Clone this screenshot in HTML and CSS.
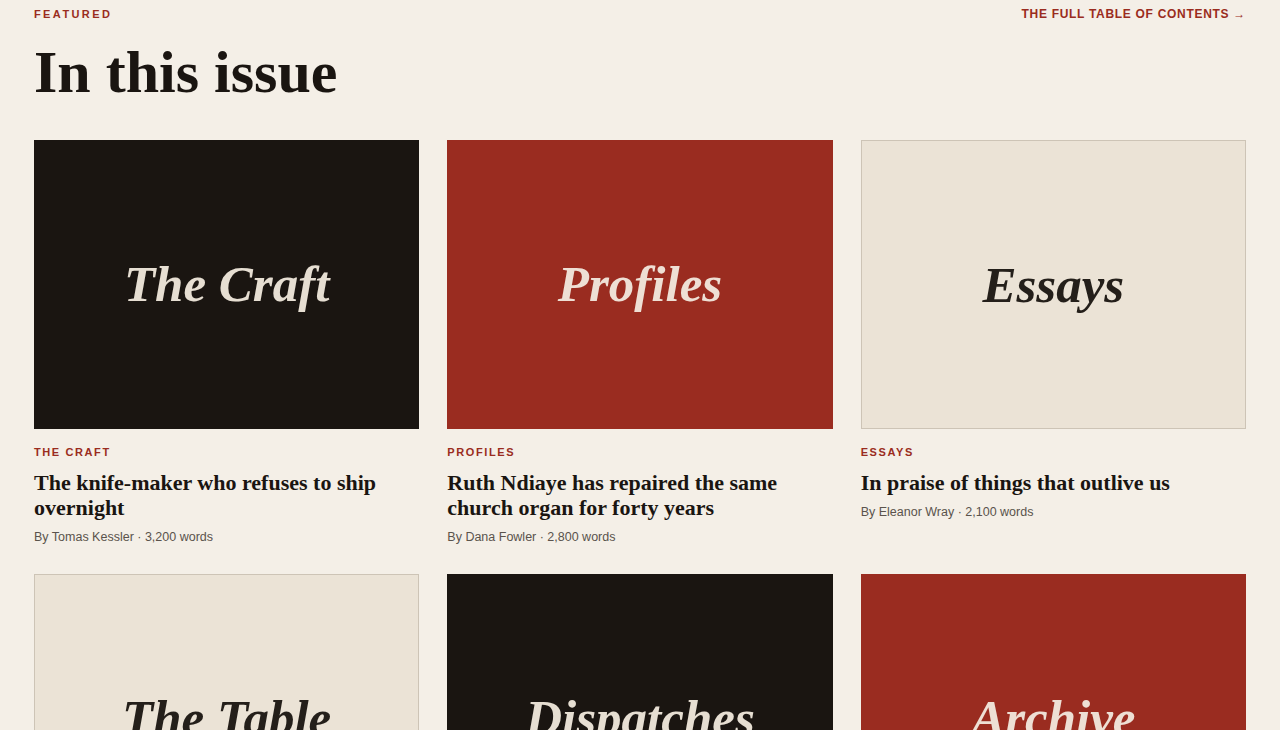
FILE: index.html
```html
<!DOCTYPE html>
<html>
    <head>
        <title>In this issue</title>
        <link rel="stylesheet" href="styles.css">
    </head>

    <body>
        <div id="page">
            <div class="topbar">
                <span class="kicker">Featured</span>
                <a class="toc" href="#">The full table of contents &rarr;</a>
            </div>
            <h1>In this issue</h1>

            <div class="grid">
                <div class="card">
                    <div class="cover dark"><span>The Craft</span></div>
                    <p class="section">The Craft</p>
                    <h2>The knife-maker who refuses to ship overnight</h2>
                    <p class="byline">By Tomas Kessler &middot; 3,200 words</p>
                </div>
                <div class="card">
                    <div class="cover red"><span>Profiles</span></div>
                    <p class="section">Profiles</p>
                    <h2>Ruth Ndiaye has repaired the same church organ for forty years</h2>
                    <p class="byline">By Dana Fowler &middot; 2,800 words</p>
                </div>
                <div class="card">
                    <div class="cover light"><span>Essays</span></div>
                    <p class="section">Essays</p>
                    <h2>In praise of things that outlive us</h2>
                    <p class="byline">By Eleanor Wray &middot; 2,100 words</p>
                </div>
                <div class="card">
                    <div class="cover light"><span>The Table</span></div>
                    <p class="section">The Table</p>
                    <h2>A kitchen that has fed the same street for sixty years</h2>
                    <p class="byline">By Miriam Osei &middot; 2,400 words</p>
                </div>
                <div class="card">
                    <div class="cover dark"><span>Dispatches</span></div>
                    <p class="section">Dispatches</p>
                    <h2>Letters from a ferry that only runs in winter</h2>
                    <p class="byline">By Jonas Berg &middot; 1,900 words</p>
                </div>
                <div class="card">
                    <div class="cover red"><span>Archive</span></div>
                    <p class="section">Archive</p>
                    <h2>From the archive: the last of the hand typesetters</h2>
                    <p class="byline">By Harold Finch &middot; 3,600 words</p>
                </div>
            </div>
        </div>
    </body>
</html>
```

FILE: styles.css
```css
body{margin: 0;background-color: #f4efe7;color: #1a1511;font-family: "Liberation Sans", Arial, sans-serif;}
#page{padding: 7px 34px 40px;}

.topbar{display: flex;justify-content: space-between;align-items: center;}
.kicker{font-size: 11px;font-weight: bold;letter-spacing: 2.4px;text-transform: uppercase;color: #9a2c20;}
.toc{font-size: 12px;font-weight: bold;letter-spacing: 0.7px;text-transform: uppercase;color: #9a2c20;text-decoration: none;}

h1{font-family: "Liberation Serif", "Times New Roman", serif;font-size: 60px;font-weight: bold;line-height: 1;margin: 21px 0 38px;color: #1a1511;}

.grid{display: grid;grid-template-columns: repeat(3, 1fr);column-gap: 28px;row-gap: 30px;}
.cover{aspect-ratio: 4 / 3;display: flex;align-items: center;justify-content: center;box-sizing: border-box;}
.cover span{font-family: "Liberation Serif", "Times New Roman", serif;font-style: italic;font-weight: bold;font-size: 51px;}
.cover.dark{background-color: #1a1511;color: #e6ded2;}
.cover.red{background-color: #9a2c20;color: #eedfd4;}
.cover.light{background-color: #ebe3d6;border: 1px solid #cdc4b6;color: #241f1a;}

.section{margin: 17px 0 0;font-size: 11px;font-weight: bold;letter-spacing: 1.6px;text-transform: uppercase;color: #9a2c20;}
.card h2{font-family: "Liberation Serif", "Times New Roman", serif;font-size: 22px;line-height: 25px;font-weight: bold;margin: 12px 0 0;color: #1a1511;}
.byline{margin: 10px 0 0;font-size: 12.5px;color: #5a534c;}
```
